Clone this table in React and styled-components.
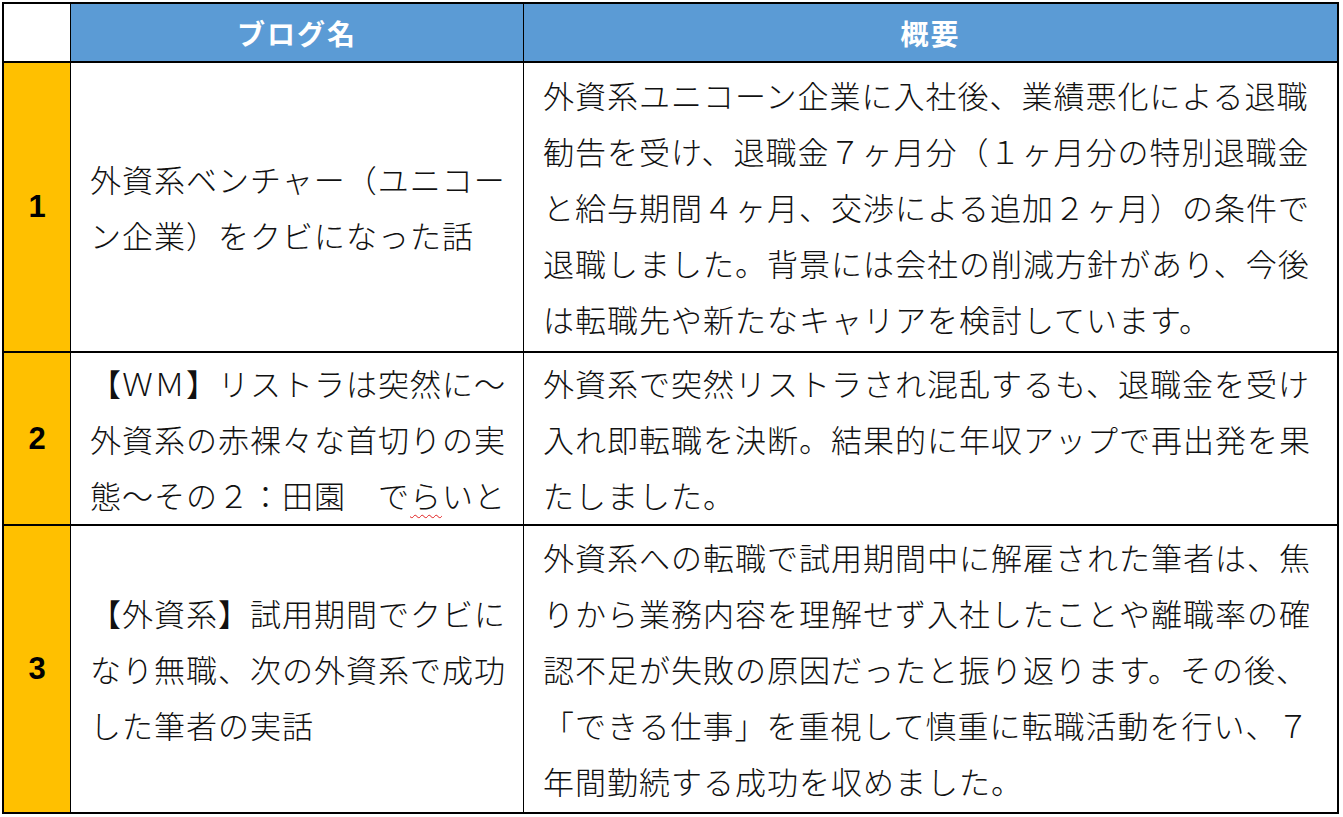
import styled, { createGlobalStyle } from "styled-components";

const GlobalStyle = createGlobalStyle`
  html, body {
    margin: 0;
    padding: 0;
    background: #fff;
  }
  body {
    font-family: "Noto Sans CJK JP", "Noto Sans", sans-serif;
    color: #111;
  }
`;

const Table = styled.div`
  display: grid;
  grid-template-columns: 66px 452px 813px;
  grid-template-rows: 57px 288px 171px 286px;
  column-gap: 1px;
  row-gap: 2px;
  width: max-content;
  margin: 2px;
  border: 2px solid #000;
  background: #000;
`;

const HeadCell = styled.div`
  display: flex;
  align-items: center;
  justify-content: center;
  background: ${props => (props.blank ? "#fff" : "#5b9bd5")};
  color: #fff;
  font-size: 28px;
  font-weight: 700;
  letter-spacing: 2px;
`;

const NumCell = styled.div`
  display: flex;
  align-items: center;
  justify-content: center;
  background: #ffc000;
  color: #000;
  font-family: "Liberation Sans", Arial, sans-serif;
  font-size: 31px;
  font-weight: 700;
`;

const TextCell = styled.div`
  display: flex;
  flex-direction: column;
  justify-content: center;
  background: #fff;
  padding: 0 19px;
  font-size: 31px;
  font-weight: 300;
  letter-spacing: 1px;
  line-height: 56px;
  white-space: nowrap;
`;

const Line = styled.div`
  height: 56px;
`;

const Typo = styled.span`
  text-decoration: underline wavy #e02020;
  text-decoration-thickness: 1px;
  text-underline-offset: 6px;
`;

const rows = [
  {
    num: "1",
    title: ["外資系ベンチャー（ユニコー", "ン企業）をクビになった話"],
    summary: [
      "外資系ユニコーン企業に入社後、業績悪化による退職",
      "勧告を受け、退職金７ヶ月分（１ヶ月分の特別退職金",
      "と給与期間４ヶ月、交渉による追加２ヶ月）の条件で",
      "退職しました。背景には会社の削減方針があり、今後",
      "は転職先や新たなキャリアを検討しています。",
    ],
  },
  {
    num: "2",
    title: [
      "【ＷＭ】リストラは突然に～",
      "外資系の赤裸々な首切りの実",
      <>
        態～その２：田園　で<Typo>ら</Typo>いと
      </>,
    ],
    summary: [
      "外資系で突然リストラされ混乱するも、退職金を受け",
      "入れ即転職を決断。結果的に年収アップで再出発を果",
      "たしました。",
    ],
  },
  {
    num: "3",
    title: ["【外資系】試用期間でクビに", "なり無職、次の外資系で成功", "した筆者の実話"],
    summary: [
      "外資系への転職で試用期間中に解雇された筆者は、焦",
      "りから業務内容を理解せず入社したことや離職率の確",
      "認不足が失敗の原因だったと振り返ります。その後、",
      "「できる仕事」を重視して慎重に転職活動を行い、７",
      "年間勤続する成功を収めました。",
    ],
  },
];

const App = () => {
  return (
    <>
      <GlobalStyle />
      <Table>
        <HeadCell blank />
        <HeadCell>ブログ名</HeadCell>
        <HeadCell>概要</HeadCell>
        {rows.map(row => (
          <Row key={row.num} row={row} />
        ))}
      </Table>
    </>
  );
};

const Row = ({ row }) => (
  <>
    <NumCell>{row.num}</NumCell>
    <TextCell>
      {row.title.map((line, i) => (
        <Line key={i}>{line}</Line>
      ))}
    </TextCell>
    <TextCell>
      {row.summary.map((line, i) => (
        <Line key={i}>{line}</Line>
      ))}
    </TextCell>
  </>
);

export default App;
